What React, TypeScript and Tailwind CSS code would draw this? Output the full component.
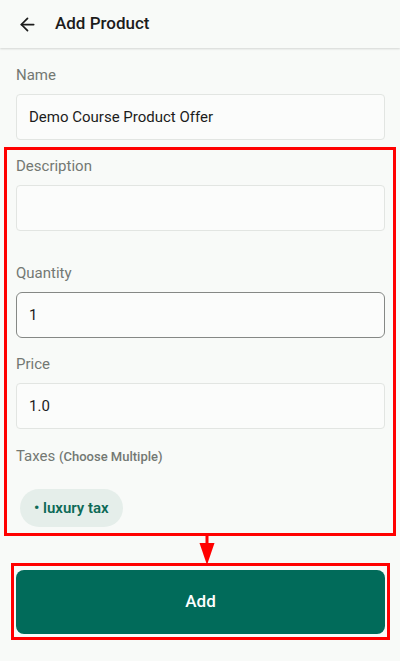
import { ArrowLeft } from "lucide-react";

const font = { fontFamily: "Roboto, 'Noto Sans', sans-serif" };

type FieldProps = {
    label: React.ReactNode;
    value?: string;
    focused?: boolean;
    className?: string;
};

const Field = ({ label, value, focused, className }: FieldProps) => {
    return (
        <div className={className}>
            <div className="text-[15px] leading-5 text-[#737873]">{label}</div>
            <div
                className={
                    focused
                        ? "mt-[9px] flex h-[46px] items-center rounded-[6px] border border-[#858885] bg-[#fbfcfb] px-3 text-[15px] text-[#1c1c1c]"
                        : "mt-[9px] flex h-[46px] items-center rounded-[4px] border border-[#e2e5e2] bg-[#fbfcfb] px-3 text-[15px] text-[#1c1c1c]"
                }
            >
                {value}
            </div>
        </div>
    );
};

export default function App() {
    return (
        <div style={font} className="flex h-[661px] w-[400px] flex-col bg-[#f8faf8]">
            <div className="flex h-12 items-center gap-[17px] bg-[#f8faf8] pl-[17px] shadow-[0_1px_2px_rgba(0,0,0,0.15)]">
                <ArrowLeft size={21} strokeWidth={2} className="text-[#1c1c1c]" />
                <span className="text-[17px] font-medium text-[#1c1c1c]">Add Product</span>
            </div>

            <Field label="Name" value="Demo Course Product Offer" className="mt-[17px] px-4 pr-[15px]" />

            <div className="mx-1 mt-[7px] border-[3px] border-[#ff0000] pb-[6px] pl-[9px] pr-[8px] pt-[6px]">
                <Field label="Description" />
                <Field label="Quantity" value="1" focused className="mt-[32px]" />
                <Field label="Price" value="1.0" className="mt-[16px]" />
                <div className="mt-[17px] text-[15px] leading-5 text-[#737873]">
                    Taxes <span className="text-[13px] font-medium">(Choose Multiple)</span>
                </div>
                <div className="mt-[22px] flex">
                    <div className="ml-1 flex h-[38px] items-center rounded-full bg-[#e5eeea] px-[14px] text-[15px] font-semibold text-[#0e6a57]">
                        • luxury tax
                    </div>
                </div>
            </div>

            <div className="h-[27px]">
                <svg width="18" height="30" viewBox="0 0 18 30" className="ml-[198px] overflow-visible">
                    <rect x="7.5" y="0" width="3" height="8" fill="#ff0000" />
                    <polygon points="1.5,7 16.5,7 9,29" fill="#ff0000" />
                </svg>
            </div>

            <div className="ml-[11px] w-[379px] border-[3px] border-[#ff0000] px-[2px] pb-[3px] pt-[4px]">
                <button className="flex h-16 w-full items-center justify-center rounded-[8px] bg-[#016b5a] text-[17px] font-medium text-white">
                    Add
                </button>
            </div>
        </div>
    );
}
